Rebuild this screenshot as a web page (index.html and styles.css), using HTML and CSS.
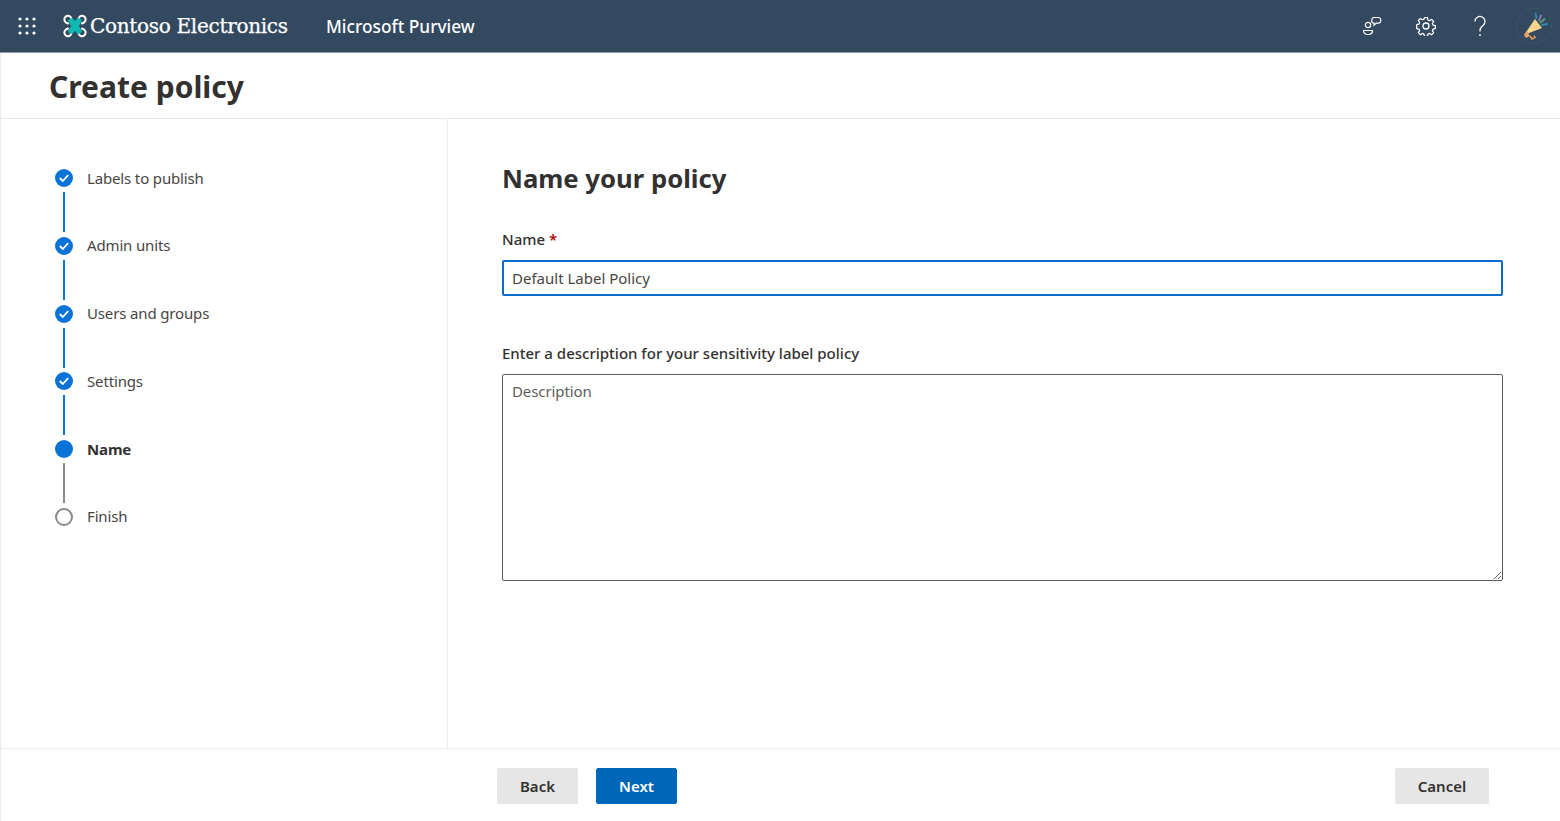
FILE: index.html
```html
<!DOCTYPE html>
<html lang="en">
<head>
<meta charset="utf-8">
<title>Create policy</title>
<link rel="stylesheet" href="styles.css">
</head>
<body>
<header class="topbar">
  <button class="waffle" aria-label="App launcher">
    <svg width="18" height="18" viewBox="0 0 18 18" fill="#fff"><circle cx="2" cy="2" r="1.6"/><circle cx="9" cy="2" r="1.6"/><circle cx="16" cy="2" r="1.6"/><circle cx="2" cy="9" r="1.6"/><circle cx="9" cy="9" r="1.6"/><circle cx="16" cy="9" r="1.6"/><circle cx="2" cy="16" r="1.6"/><circle cx="9" cy="16" r="1.6"/><circle cx="16" cy="16" r="1.6"/></svg>
  </button>
  <div class="brand">
    <svg class="brand-logo" width="26" height="28" viewBox="0 0 26 28">
      <path d="M6 8.500 L9.500 5 L13 9 L16.500 5 L20 8.500 L17 14 L20 19.500 L16.500 23 L13 19 L9.500 23 L6 19.500 L9 14 Z" fill="#0fb9b1"/>
      <g fill="none" stroke="#fff" stroke-width="2" stroke-linecap="round">
        <path d="M9 5.500 A3.600 3.600 0 1 0 3.800 10.300 L6 11.500"/>
        <path d="M17 5.500 A3.600 3.600 0 1 1 22.200 10.300 L20 11.500"/>
        <path d="M9 22.500 A3.600 3.600 0 1 1 3.800 17.700 L6 16.500"/>
        <path d="M17 22.500 A3.600 3.600 0 1 0 22.200 17.700 L20 16.500"/>
      </g>
    </svg>
    <span class="brand-name">Contoso Electronics</span>
  </div>
  <span class="product">Microsoft Purview</span>
  <div class="actions">
    <button class="action" aria-label="Community">
      <svg width="20" height="20" viewBox="0 0 20 20" fill="none" stroke="#fff" stroke-width="1.2"><circle cx="6" cy="9" r="2.7"/><path d="M1.500 14.500h9c0 2.600-2 4-4.500 4s-4.500-1.400-4.500-4z"/><path d="M11 1.500h5.500a2.200 2.200 0 0 1 2.200 2.200v1.300a2.200 2.200 0 0 1-2.200 2.200h-2.200l-2.300 2v-2.100a2.200 2.200 0 0 1-2.200-2.100v-1.300a2.200 2.200 0 0 1 2.200-2.200z"/></svg>
    </button>
    <button class="action" aria-label="Settings">
      <svg width="20" height="20" viewBox="0 0 20 20" fill="none" stroke="#fff" stroke-width="1.300" stroke-linejoin="round"><circle cx="10" cy="10" r="3"/><path d="M8.400 1.200h3.200l.5 2.500 1.700.7 2.100-1.400 2.200 2.200-1.400 2.100.7 1.700 2.400.5v3.200l-2.400.5-.7 1.700 1.400 2.100-2.200 2.200-2.100-1.400-1.700.7-.5 2.400H8.400l-.5-2.400-1.700-.7-2.100 1.400-2.200-2.200 1.400-2.100-.7-1.700-2.400-.5V8.500l2.400-.5.7-1.700-1.400-2.100 2.200-2.200 2.100 1.400 1.700-.7z" transform="translate(.5 .5) scale(.95)"/></svg>
    </button>
    <button class="action" aria-label="Help">
      <svg width="20" height="22" viewBox="0 0 20 22" fill="none" stroke="#fff" stroke-width="1.3"><path d="M5 6.500a5 5 0 1 1 8 4c-2 1.500-3 2.500-3 5v1"/><circle cx="10" cy="20" r=".9" fill="#fff" stroke="none"/></svg>
    </button>
    <button class="action avatar" aria-label="What's new">
      <svg width="36" height="36" viewBox="0 0 36 36" fill="none"><circle cx="18" cy="18" r="17.500" stroke="#3d5369"/><path d="M8 27 L19 11 L26 20 Z" fill="#f8d68f"/><path d="M8 27 L10 30 L14 28 L11 23 Z" fill="#ec9f62"/><path d="M14 28l2 3 3-1.500-1-2" stroke="#ec9f62" stroke-width="1.500"/><path d="M20.500 10l-1-4.500" stroke="#2d8ca8" stroke-width="1.800" stroke-linecap="round"/><path d="M23 12.500l2-5" stroke="#8f7fb8" stroke-width="1.800" stroke-linecap="round"/><path d="M24.500 14.500l4-3.500" stroke="#5ea37d" stroke-width="1.800" stroke-linecap="round"/><path d="M26 17l5-1" stroke="#2d8ca8" stroke-width="1.800" stroke-linecap="round"/></svg>
    </button>
  </div>
</header>

<div class="page">
  <div class="title-row"><h1 class="title">Create policy</h1></div>
  <div class="body">
    <nav class="steps">
      <div class="step"><span class="dot done"><svg width="10" height="8" viewBox="0 0 10 8" fill="none" stroke="#fff" stroke-width="1.800"><path d="M.8 4l3 3 5.400-6"/></svg></span><span class="step-label">Labels to publish</span></div>
      <div class="line on"></div>
      <div class="step"><span class="dot done"><svg width="10" height="8" viewBox="0 0 10 8" fill="none" stroke="#fff" stroke-width="1.800"><path d="M.8 4l3 3 5.400-6"/></svg></span><span class="step-label">Admin units</span></div>
      <div class="line on"></div>
      <div class="step"><span class="dot done"><svg width="10" height="8" viewBox="0 0 10 8" fill="none" stroke="#fff" stroke-width="1.800"><path d="M.8 4l3 3 5.400-6"/></svg></span><span class="step-label">Users and groups</span></div>
      <div class="line on"></div>
      <div class="step"><span class="dot done"><svg width="10" height="8" viewBox="0 0 10 8" fill="none" stroke="#fff" stroke-width="1.800"><path d="M.8 4l3 3 5.400-6"/></svg></span><span class="step-label">Settings</span></div>
      <div class="line on"></div>
      <div class="step"><span class="dot done"></span><span class="step-label current">Name</span></div>
      <div class="line"></div>
      <div class="step"><span class="dot todo"></span><span class="step-label">Finish</span></div>
    </nav>
    <main class="content">
      <h2 class="heading">Name your policy</h2>
      <label class="label label-name" for="name">Name <span class="req">*</span></label>
      <input class="name-input" id="name" type="text" value="Default Label Policy">
      <label class="label label-desc" for="desc">Enter a description for your sensitivity label policy</label>
      <textarea class="desc-input" id="desc" placeholder="Description"></textarea>
    </main>
  </div>
  <footer class="footer">
    <div class="nav-buttons">
      <button class="btn">Back</button>
      <button class="btn primary">Next</button>
    </div>
    <button class="btn cancel">Cancel</button>
  </footer>
</div>
</body>
</html>
```

FILE: styles.css
```css
* { box-sizing: border-box; }
html, body { height: 100%; }
body {
  margin: 0;
  display: flex;
  flex-direction: column;
  height: 100vh;
  overflow: hidden;
  background: #fff;
  color: #323130;
  font-family: "Noto Sans", "Open Sans", sans-serif;
}
button { font-family: inherit; cursor: pointer; }

.topbar {
  flex: 0 0 52px;
  display: flex;
  align-items: center;
  background: #32495f;
  color: #fff;
  border-bottom: 1px solid #8a9aa8;
}
.waffle {
  width: 53px; height: 52px;
  padding: 0; border: 0; background: none;
  display: flex; align-items: center; justify-content: center;
  margin-right: 9px;
}
.brand { display: flex; align-items: center; width: 264px; }
.brand-logo { flex: none; margin-right: 2px; }
.brand-name {
  font-family: "DejaVu Serif", "Liberation Serif", serif;
  font-size: 20px;
  letter-spacing: -0.3px;
  -webkit-text-stroke: 0.25px #fff;
  white-space: nowrap;
}
.product { font-size: 17.300px; font-weight: 500; white-space: nowrap; }
.actions { margin-left: auto; display: flex; }
.action {
  width: 54px; height: 52px;
  padding: 0; border: 0; background: none;
  display: flex; align-items: center; justify-content: center;
}
.avatar { width: 54px; margin-right: -1px; }

.page {
  flex: 1;
  min-height: 0;
  display: flex;
  flex-direction: column;
  border-left: 1px solid #edebe9;
}
.title-row {
  flex: 0 0 66px;
  display: flex;
  align-items: center;
  padding: 2px 0 0 48px;
  border-bottom: 1px solid #e9e8e7;
}
.title { margin: 0; font-size: 30px; font-weight: 700; color: #323130; }

.body { flex: 1; min-height: 0; display: flex; }
.steps {
  flex: 0 0 447px;
  padding: 50px 0 0 54px;
  border-right: 1px solid #edebe9;
}
.step { display: flex; align-items: center; height: 18px; }
.dot {
  flex: none;
  width: 18px; height: 18px;
  border-radius: 50%;
  display: flex; align-items: center; justify-content: center;
}
.done { background: #0a74d6; }
.todo { border: 2.500px solid #8a8a8a; }
.step-label { margin-left: 14px; padding-bottom: 1px; font-size: 15px; letter-spacing: -0.150px; color: #484644; white-space: nowrap; }
.current { font-weight: 700; color: #323130; }
.line {
  width: 2px; height: 40px;
  margin: 5px 0 4.750px 8px;
  background: #8a8a8a;
}
.on { background: #0a74d6; }

.content { flex: 1; min-width: 0; padding: 41px 57px 0 54px; }
.heading { margin: 0; font-size: 25.700px; font-weight: 700; line-height: 38px; color: #323130; }
.label { display: block; font-size: 15px; font-weight: 500; line-height: 22px; color: #323130; }
.label-name { margin-top: 30px; }
.req { color: #a80000; }
.name-input {
  display: block;
  width: 100%; height: 36px;
  margin-top: 10px;
  padding: 0 8px;
  border: 2px solid #0a6ccb;
  border-radius: 2px;
  outline: 0;
  font: inherit;
  font-size: 15px;
  color: #484644;
}
.label-desc { margin-top: 46px; }
.desc-input {
  display: block;
  width: 100%; height: 207px;
  margin-top: 10px;
  padding: 5px 9px;
  border: 1px solid #605e5c;
  border-radius: 2px;
  outline: 0;
  font: inherit;
  font-size: 15px;
  letter-spacing: -0.100px;
  line-height: 22px;
}
.desc-input::placeholder { color: #605e5c; opacity: 1; }

.footer {
  flex: 0 0 73px;
  display: flex;
  align-items: center;
  justify-content: space-between;
  padding: 1px 71px 0 496px;
  border-top: 1px solid #edebe9;
}
.nav-buttons { display: flex; gap: 18px; }
.btn {
  width: 81px; height: 36px;
  padding: 0;
  border: 1px solid #e6e6e6;
  border-radius: 2px;
  background: #e6e6e6;
  font-size: 15px;
  font-weight: 600;
  color: #323130;
}
.primary { background: #0067b8; border-color: #0067b8; color: #fff; }
.cancel { width: 94px; }
```
